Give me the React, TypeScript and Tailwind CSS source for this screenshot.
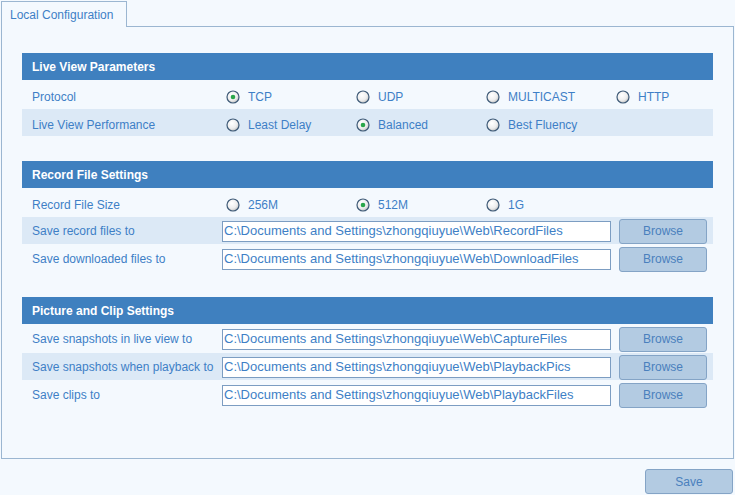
import React from "react";

const Radio = ({ checked }: { checked?: boolean }) => (
  <svg width="14" height="14" viewBox="0 0 14 14" className="shrink-0">
    <defs>
      <radialGradient id="rg" cx="40%" cy="35%" r="70%">
        <stop offset="0%" stopColor="#ffffff" />
        <stop offset="60%" stopColor="#eeeeee" />
        <stop offset="100%" stopColor="#bdbdbd" />
      </radialGradient>
    </defs>
    <circle cx="7" cy="7" r="6" fill="url(#rg)" stroke="#3f5b78" strokeWidth="1.2" />
    {checked && <circle cx="7" cy="7" r="2.3" fill="#2aa64a" />}
  </svg>
);

const Header = ({ title }: { title: string }) => (
  <div className="h-[27px] bg-[#3f80bf] text-white font-bold text-[12px] flex items-center pl-[10px]">
    {title}
  </div>
);

const Row = ({ label, alt, radio, children }: { label: string; alt?: boolean; radio?: boolean; children?: React.ReactNode }) => (
  <div className={`h-[27px] flex items-center ${radio ? "pt-[4px]" : "pt-px"} ${alt ? "bg-[#dce9f6]" : ""}`}>
    <div className="w-[200px] shrink-0 pl-[10px] text-[12px] text-[#3e7fc6] whitespace-nowrap">{label}</div>
    {children}
  </div>
);

const Options = ({ items, checked }: { items: string[]; checked: number }) => (
  <div className="flex shrink-0">
    {items.map((t, i) => (
      <div key={t} className="w-[130px] shrink-0 flex items-center pl-[4px] gap-[8px] text-[12px] text-[#3e7fc6] whitespace-nowrap">
        <Radio checked={i === checked} />
        <span>{t}</span>
      </div>
    ))}
  </div>
);

const Btn = ({ label }: { label: string }) => (
  <button className="w-[88px] h-[25px] rounded-[3px] bg-[#b3cbe2] border border-[#84a4c6] text-[12px] text-[#4a80bd] flex items-center justify-center">
    {label}
  </button>
);

const PathRow = ({ label, path, alt }: { label: string; path: string; alt?: boolean }) => (
  <Row label={label} alt={alt}>
    <div className="w-[389px] shrink-0 h-[21px] bg-white border border-[#7c9dc2] flex items-center pl-[1px] text-[13px] text-[#3e7fc6] whitespace-nowrap overflow-hidden">
      {path}
    </div>
    <div className="ml-[8px] shrink-0">
      <Btn label="Browse" />
    </div>
  </Row>
);

export default function App() {
  const base = "C:\\Documents and Settings\\zhongqiuyue\\Web\\";
  return (
    <div
      className="w-[735px] h-[495px] bg-[#f4f9fe] pt-px pl-px overflow-hidden"
      style={{ fontFamily: '"Liberation Sans", Arial, sans-serif' }}
    >
      <div className="relative z-10 -mb-px w-[126px] h-[26px] border border-b-0 border-[#9bb6d1] bg-[#f4f9fe] pl-[8px] flex items-center text-[12px] text-[#3e7fc6]">
        Local Configuration
      </div>
      <div className="w-[733px] h-[433px] border border-[#9bb6d1] pt-[26px] px-[20px]">
        <div className="flex flex-col gap-[25px]">
          <div className="flex flex-col gap-px">
            <Header title="Live View Parameters" />
            <Row label="Protocol" radio>
              <Options items={["TCP", "UDP", "MULTICAST", "HTTP"]} checked={0} />
            </Row>
            <Row label="Live View Performance" alt radio>
              <Options items={["Least Delay", "Balanced", "Best Fluency"]} checked={1} />
            </Row>
          </div>
          <div className="flex flex-col gap-px">
            <Header title="Record File Settings" />
            <Row label="Record File Size" radio>
              <Options items={["256M", "512M", "1G"]} checked={1} />
            </Row>
            <PathRow label="Save record files to" path={base + "RecordFiles"} alt />
            <PathRow label="Save downloaded files to" path={base + "DownloadFiles"} />
          </div>
          <div className="flex flex-col gap-px">
            <Header title="Picture and Clip Settings" />
            <PathRow label="Save snapshots in live view to" path={base + "CaptureFiles"} />
            <PathRow label="Save snapshots when playback to" path={base + "PlaybackPics"} alt />
            <PathRow label="Save clips to" path={base + "PlaybackFiles"} />
          </div>
        </div>
      </div>
      <div className="w-[733px] flex justify-end pr-px mt-[10px]">
        <Btn label="Save" />
      </div>
    </div>
  );
}
